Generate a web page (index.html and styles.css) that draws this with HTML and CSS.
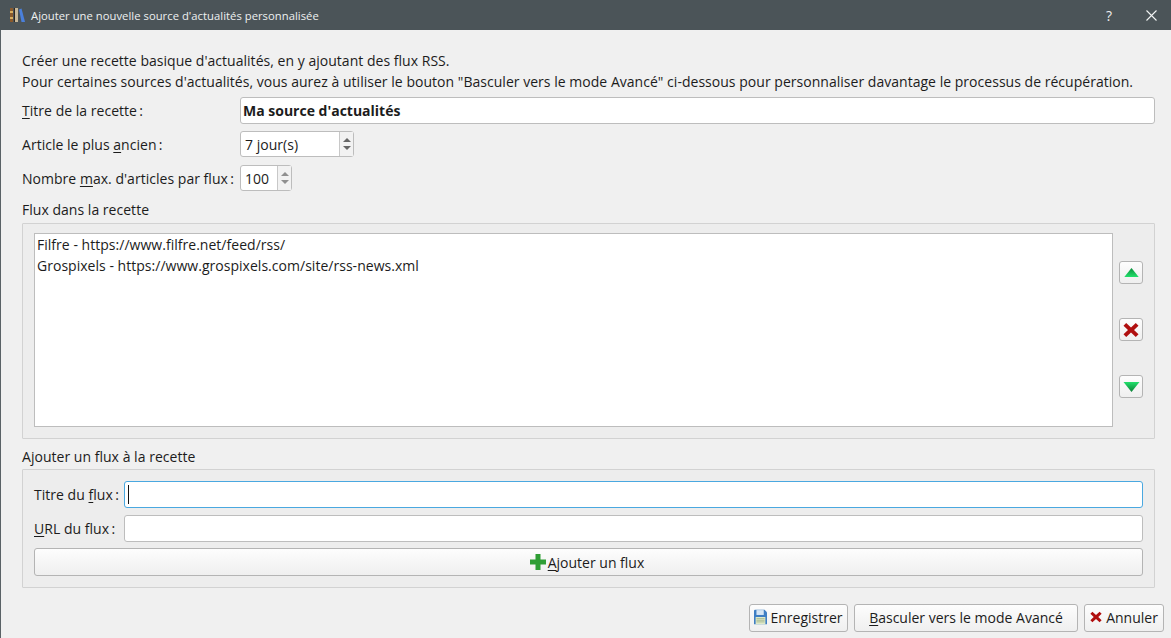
FILE: index.html
```html
<!DOCTYPE html>
<html lang="fr">
<head>
<meta charset="utf-8">
<title>Ajouter une nouvelle source d'actualités personnalisée</title>
<link rel="stylesheet" href="styles.css">
</head>
<body>
<div class="window">
  <header class="titlebar">
    <svg class="app-icon" viewBox="0 0 16 16" width="16" height="16">
      <rect x="0" y="1" width="3" height="14" fill="#8a5a2c"/>
      <rect x="0" y="4" width="3" height="2" fill="#d8b060"/>
      <rect x="0" y="10" width="3" height="2" fill="#d8b060"/>
      <rect x="4" y="1" width="4" height="14" fill="#c8b898"/>
      <rect x="4" y="1" width="1" height="14" fill="#2d2620"/>
      <path d="M9 2.500l2.500-1 3.500 13.500h-3.500z" fill="#4a80dc"/>
    </svg>
    <span class="title">Ajouter une nouvelle source d'actualités personnalisée</span>
    <span class="help">?</span>
    <svg class="close" viewBox="0 0 11 11" width="11" height="11"><path d="M.5.5l10 10M10.500.5l-10 10" stroke="#f2f4f4" stroke-width="1.1" fill="none"/></svg>
  </header>
  <main class="content">
    <p class="intro">Créer une recette basique d'actualités, en y ajoutant des flux RSS.<br>Pour certaines sources d'actualités, vous aurez à utiliser le bouton "Basculer vers le mode Avancé" ci-dessous pour personnaliser davantage le processus de récupération.</p>

    <div class="form-row row-title">
      <label class="form-label"><u>T</u>itre de la recette&#8201;:</label>
      <input class="field field-bold" type="text" value="Ma source d'actualités">
    </div>
    <div class="form-row row-age">
      <label class="form-label">Article le plus <u>a</u>ncien&#8201;:</label>
      <div class="spin spin-age"><span class="spin-value">7 jour(s)</span><span class="spin-arrows"><i class="up"></i><i class="down"></i></span></div>
    </div>
    <div class="form-row row-max">
      <label class="form-label">Nombre <u>m</u>ax. d'articles par flux&#8201;:</label>
      <div class="spin spin-max"><span class="spin-value">100</span><span class="spin-arrows"><i class="up"></i><i class="down"></i></span></div>
    </div>

    <div class="group-title title-feeds">Flux dans la recette</div>
    <section class="group group-feeds">
      <div class="feed-list">
        <div>Filfre - https://www.filfre.net/feed/rss/</div>
        <div>Grospixels - https://www.grospixels.com/site/rss-news.xml</div>
      </div>
      <div class="side-buttons">
        <button class="btn side-btn" type="button" aria-label="Monter">
          <svg viewBox="0 0 16 10" width="17" height="9"><defs><linearGradient id="gu" x1="0" y1="0" x2="0" y2="1"><stop offset="0" stop-color="#0c8f3c"/><stop offset="1" stop-color="#22e06c"/></linearGradient></defs><path d="M8 0l8 10H0z" fill="url(#gu)"/></svg>
        </button>
        <button class="btn side-btn" type="button" aria-label="Supprimer">
          <svg viewBox="0 0 16 16" width="16" height="16"><path d="M3.200 1L8 5.400 12.800 1 15.500 3.700 11 8l4.500 4.300-2.700 2.700L8 10.600 3.200 15 .5 12.300 5 8 .5 3.700z" fill="#b00f0f"/></svg>
        </button>
        <button class="btn side-btn" type="button" aria-label="Descendre">
          <svg viewBox="0 0 16 10" width="17" height="10"><defs><linearGradient id="gd" x1="0" y1="0" x2="0" y2="1"><stop offset="0" stop-color="#22e06c"/><stop offset="1" stop-color="#0c7f36"/></linearGradient></defs><path d="M0 0h16L8 10z" fill="url(#gd)"/></svg>
        </button>
      </div>
    </section>

    <div class="group-title title-add">Ajouter un flux à la recette</div>
    <section class="group group-add">
      <div class="add-row">
        <label class="add-label">Titre du <u>f</u>lux&#8201;:</label>
        <div class="field field-focus"><span class="caret"></span></div>
      </div>
      <div class="add-row">
        <label class="add-label"><u>U</u>RL du flux&#8201;:</label>
        <div class="field"></div>
      </div>
      <button class="btn add-btn" type="button">
        <svg viewBox="0 0 16 16" width="16" height="16"><path d="M5.500 0h5v5.500H16v5h-5.500V16h-5v-5.500H0v-5h5.500z" fill="#2f9e35"/></svg><span><u>A</u>jouter un flux</span>
      </button>
    </section>

    <footer class="actions">
      <button class="btn action btn-save" type="button">
        <svg viewBox="0 0 16 18" width="13" height="16"><path d="M1 0h12l3 3v15H0V1z" fill="#3f7fc4"/><rect x="3" y="0.500" width="9" height="6" fill="#d6e6f5"/><rect x="2" y="9" width="12" height="9" fill="#dfe9c8"/><path d="M3 11h10M3 13h10M3 15h10" stroke="#9fb38a" stroke-width="1"/></svg><span>Enregistrer</span>
      </button>
      <button class="btn action btn-switch" type="button"><span><u>B</u>asculer vers le mode Avancé</span></button>
      <button class="btn action btn-cancel" type="button">
        <svg viewBox="0 0 16 16" width="12" height="12"><path d="M3.200 1L8 5.400 12.800 1l2.700 2.700L11 8l4.500 4.300-2.700 2.700L8 10.600 3.200 15 .5 12.300 5 8 .5 3.700z" fill="#b00f0f"/></svg><span>Annuler</span>
      </button>
    </footer>
  </main>
</div>
</body>
</html>
```

FILE: styles.css
```css
* { box-sizing: border-box; }
html, body { margin: 0; padding: 0; height: 100%; overflow: hidden; }
body {
  font-family: "Open Sans", "Noto Sans", "Liberation Sans", sans-serif;
  font-size: 14px;
  letter-spacing: 0.027px;
  color: #1c1c1c;
  background: #f0f0f0;
}
u { text-underline-offset: 2px; text-decoration-thickness: 1px; }
.window { width: 1171px; height: 638px; display: flex; flex-direction: column; border-left: 1px solid #5a6266; }
.titlebar {
  height: 30px; flex: none; margin-left: -1px; background: #4b5458; color: #eef0f0;
  display: flex; align-items: center; padding-left: 10px;
}
.app-icon { flex: none; }
.title { font-size: 11.25px; margin-left: 5px; flex: 1; }
.help { font-size: 14px; margin-right: 34px; }
.close { margin-right: 14px; }
.content { flex: 1; padding: 20px 16px 0 21px; display: flex; flex-direction: column; }
.intro { margin: 0; line-height: 21px; white-space: nowrap; }
.form-row { display: flex; align-items: center; }
.row-title { margin-top: 5px; height: 27px; }
.row-age { margin-top: 7px; height: 26px; }
.row-max { margin-top: 8px; height: 26px; }
.form-label { width: 218px; flex: none; white-space: nowrap; }
.field {
  height: 27px; background: #fff; border: 1px solid #bdbdbd; border-radius: 3px;
  font: inherit; color: inherit; padding: 0 2px; outline: none; flex: 1; min-width: 0;
  display: flex; align-items: center;
}
.field-bold { font-weight: 700; }
.field-focus { border-color: #4aa8e0; }
.caret { width: 1px; height: 19px; background: #111; margin-left: 1px; }
.spin {
  height: 26px; background: #fff; border: 1px solid #bdbdbd; border-radius: 3px;
  display: flex; align-items: stretch;
}
.spin-age { width: 114px; }
.spin-max { width: 52px; }
.spin-value { flex: 1; padding-left: 4px; line-height: 25px; }
.spin-arrows {
  width: 14px; border-left: 1px solid #c8c8c8; background: #f2f2f2;
  display: flex; flex-direction: column; align-items: center; justify-content: center; gap: 4px;
}
.spin-arrows i { width: 0; height: 0; border-left: 4px solid transparent; border-right: 4px solid transparent; }
.spin-arrows .up { border-bottom: 4px solid #666; }
.spin-arrows .down { border-top: 4px solid #666; }
.row-max .spin-arrows i { opacity: .7; }
.group-title { line-height: 20px; }
.title-feeds { margin-top: 9px; }
.group { border: 1px solid #d2d2d2; background: #ededed; border-radius: 1px; margin-top: 3px; }
.group-feeds { height: 216px; padding: 9px 11px 11px 11px; display: flex; }
.feed-list {
  width: 1079px; flex: none; background: #fff; border: 1px solid #bdbdbd; padding: 0 2px;
  line-height: 21px;
}
.side-buttons { display: flex; flex-direction: column; margin-left: 6px; padding-top: 28px; gap: 34px; }
.side-btn { width: 24px; height: 23px; padding: 0; }
.btn {
  background: linear-gradient(#fdfdfd, #efefef); border: 1px solid #b4b4b4; border-radius: 3px;
  font: inherit; color: inherit; display: flex; align-items: center; justify-content: center;
  white-space: nowrap;
}
.title-add { margin-top: 8px; }
.group-add { height: 119px; margin-top: 2px; padding: 11px 11px 0 11px; display: flex; flex-direction: column; gap: 7px; }
.add-row { display: flex; align-items: center; height: 27px; }
.add-label { width: 90px; flex: none; white-space: nowrap; }
.add-btn { height: 28px; width: 100%; margin-top: -1px; gap: 2px; padding: 0 3px 0 0; }
.actions { display: flex; justify-content: flex-end; gap: 6px; margin-top: 16px; margin-right: -9px; }
.action { height: 28px; padding: 0 0 2px; gap: 3px; }
.btn-save { width: 99px; }
.btn-switch { width: 224px; }
.btn-cancel { width: 80px; gap: 4px; }
```
